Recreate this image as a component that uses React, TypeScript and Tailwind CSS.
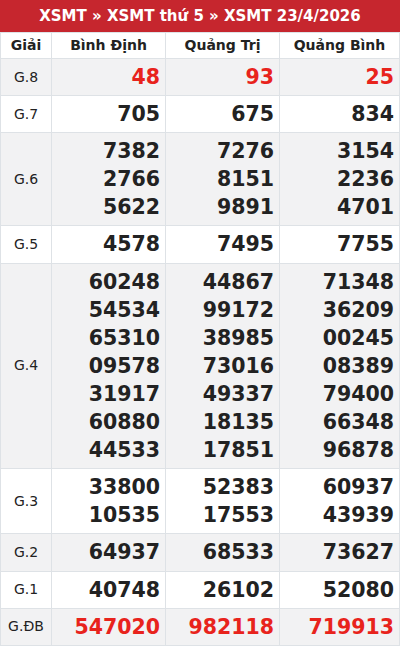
import React from 'react';

type Row = { label: string; values: string[][]; red?: boolean; gray?: boolean };

const PROVINCES = ['Bình Định', 'Quảng Trị', 'Quảng Bình'];

const ROWS: Row[] = [
  { label: 'G.8', values: [['48'], ['93'], ['25']], red: true, gray: true },
  { label: 'G.7', values: [['705'], ['675'], ['834']] },
  { label: 'G.6', values: [['7382', '2766', '5622'], ['7276', '8151', '9891'], ['3154', '2236', '4701']], gray: true },
  { label: 'G.5', values: [['4578'], ['7495'], ['7755']] },
  {
    label: 'G.4',
    values: [
      ['60248', '54534', '65310', '09578', '31917', '60880', '44533'],
      ['44867', '99172', '38985', '73016', '49337', '18135', '17851'],
      ['71348', '36209', '00245', '08389', '79400', '66348', '96878'],
    ],
    gray: true,
  },
  { label: 'G.3', values: [['33800', '10535'], ['52383', '17553'], ['60937', '43939']] },
  { label: 'G.2', values: [['64937'], ['68533'], ['73627']], gray: true },
  { label: 'G.1', values: [['40748'], ['26102'], ['52080']] },
  { label: 'G.ĐB', values: [['547020'], ['982118'], ['719913']], red: true, gray: true },
];

export default function App() {
  return (
    <div className="w-[400px] bg-white" style={{ fontFamily: '"DejaVu Sans", sans-serif' }}>
      <div className="h-8 bg-[#c6262e] flex items-center justify-center text-white font-bold text-[15px]">
        XSMT » XSMT thứ 5 » XSMT 23/4/2026
      </div>
      <table className="w-full table-fixed border-collapse border border-[#dee2e6]">
        <colgroup>
          <col className="w-[51px]" />
          <col className="w-[114px]" />
          <col className="w-[114px]" />
          <col />
        </colgroup>
        <thead>
          <tr className="h-[26px]">
            <th className="border border-[#dee2e6] text-[14px] font-bold text-[#222]">Giải</th>
            {PROVINCES.map((p) => (
              <th key={p} className="border border-[#dee2e6] text-[14px] font-bold text-[#222]">
                {p}
              </th>
            ))}
          </tr>
        </thead>
        <tbody>
          {ROWS.map((row) => (
            <tr key={row.label} className={row.gray ? 'bg-[#f2f2f3]' : 'bg-white'}>
              <td className="border border-[#dee2e6] text-center text-[14px] text-[#222]">{row.label}</td>
              {row.values.map((nums, i) => (
                <td key={i} className="border border-[#dee2e6] text-right pr-[5px] py-[4px]">
                  {nums.map((n) => (
                    <div
                      key={n}
                      className={`text-[20.5px] leading-[28.1px] font-bold ${row.red ? 'text-[#e8231c]' : 'text-[#222]'}`}
                    >
                      {n}
                    </div>
                  ))}
                </td>
              ))}
            </tr>
          ))}
        </tbody>
      </table>
    </div>
  );
}
